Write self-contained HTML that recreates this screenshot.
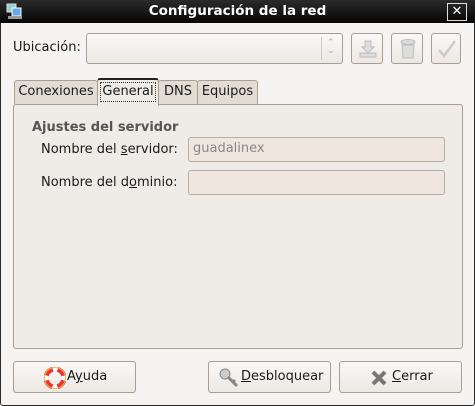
<!DOCTYPE html><html><head><style>
body{margin:0;width:475px;height:406px;overflow:hidden;font-family:"DejaVu Sans","Liberation Sans",sans-serif;font-size:13px;color:#1a1a1a}
.win{position:absolute;left:0;top:0;width:473px;height:404px;border:1px solid #2a2a2a;border-radius:3px;background:#f5f4f2}
.title{position:absolute;left:0;top:0;width:475px;height:23px;background:linear-gradient(#2b2b2b,#050505);color:#fff;font-weight:bold;font-size:13.5px;text-align:center;line-height:23px}
.ab{position:absolute}
.btn{position:absolute;border:1px solid #a89e93;border-radius:3px;background:linear-gradient(#faf9f8,#ece8e3);box-sizing:border-box}
.entry{position:absolute;border:1px solid #b8ada2;border-radius:3px;background:#efe6df;box-sizing:border-box}
.tab{position:absolute;border:1px solid #a89e93;border-bottom:none;border-radius:3px 3px 0 0;background:#e3dcd4;box-sizing:border-box;text-align:center;line-height:22px}
u{text-decoration:underline}
</style></head><body>
<div class="win"></div>
<div class="title">Configuración de la red</div>
<svg class="ab" style="left:6px;top:3px" width="18" height="17"><rect x="1" y="1" width="9" height="8" fill="#9cc" stroke="#ddd"/><rect x="6" y="5" width="9" height="8" fill="#6ae" stroke="#fff"/><rect x="2" y="13" width="14" height="3" fill="#999"/></svg>
<div class="ab" style="left:447px;top:3px;width:20px;height:18px;border:1px solid #ddd;box-sizing:border-box;color:#fff;font-weight:bold;text-align:center;line-height:16px;font-size:13px">✕</div>
<div class="ab" style="left:13px;top:40px">Ubicación:</div>
<div class="btn" style="left:86px;top:33px;width:257px;height:31px"><div class="ab" style="left:234px;top:3px;width:1px;height:23px;background:#ccc"></div><div class="ab" style="left:240px;top:5px;color:#aaa;font-size:9px;line-height:8px">⌃<br>⌄</div></div>
<div class="btn" style="left:351px;top:33px;width:32px;height:31px"><svg class="ab" style="left:6px;top:5px" width="20" height="20"><path d="M7 2h6v6h3l-6 6-6-6h3z" fill="#ddd" stroke="#bbb"/><rect x="2" y="14" width="16" height="4" fill="#ddd" stroke="#bbb"/></svg></div>
<div class="btn" style="left:391px;top:33px;width:32px;height:31px"><svg class="ab" style="left:7px;top:4px" width="18" height="22"><ellipse cx="9" cy="4" rx="7" ry="2.5" fill="#ddd" stroke="#bbb"/><path d="M3 7h12l-1 13H4z" fill="#ddd" stroke="#bbb"/></svg></div>
<div class="btn" style="left:431px;top:33px;width:30px;height:31px"><svg class="ab" style="left:5px;top:5px" width="20" height="20"><path d="M2 11l5 6L18 2" fill="none" stroke="#ccc" stroke-width="2.5"/></svg></div>
<div class="ab" style="left:13px;top:104px;width:450px;height:245px;border:1px solid #a89e93;border-radius:3px;background:#efebe7;box-sizing:border-box"></div>
<div class="tab" style="left:14px;top:80px;width:84px;height:24px">Conexiones</div>
<div class="tab" style="left:158px;top:80px;width:40px;height:24px">DNS</div>
<div class="tab" style="left:197px;top:80px;width:61px;height:24px">Equipos</div>
<div class="tab" style="left:97px;top:78px;width:62px;height:28px;background:#efebe7;border-top:2px solid #222"><span style="border:1px dotted #333;padding:0 1px;line-height:18px;display:inline-block;margin-top:2px">General</span></div>
<div class="ab" style="left:32px;top:120px;font-weight:bold;color:#555">Ajustes del servidor</div>
<div class="ab" style="left:41px;top:142px">Nombre del <u>s</u>ervidor:</div>
<div class="ab" style="left:41px;top:175px">Nombre del d<u>o</u>minio:</div>
<div class="entry" style="left:188px;top:137px;width:257px;height:25px;color:#888;padding-left:4px;line-height:22px">guadalinex</div>
<div class="entry" style="left:188px;top:170px;width:257px;height:25px"></div>
<div class="btn" style="left:13px;top:361px;width:123px;height:32px"><svg class="ab" style="left:30px;top:5px" width="22" height="22"><circle cx="11" cy="11" r="9" fill="none" stroke="#e33" stroke-width="5"/><circle cx="11" cy="11" r="9" fill="none" stroke="#fff" stroke-width="5" stroke-dasharray="5 9.1" stroke-dashoffset="2.5"/><circle cx="11" cy="11" r="10.5" fill="none" stroke="#e8b84a"/></svg><span class="ab" style="left:53px;top:7px">A<u>y</u>uda</span></div>
<div class="btn" style="left:208px;top:361px;width:123px;height:32px"><svg class="ab" style="left:9px;top:5px" width="24" height="22"><circle cx="7" cy="7" r="5" fill="#ccc" stroke="#888"/><path d="M10 10l9 9M15 15l2-2" stroke="#888" stroke-width="3"/></svg><span class="ab" style="left:32px;top:7px"><u>D</u>esbloquear</span></div>
<div class="btn" style="left:339px;top:361px;width:123px;height:32px"><svg class="ab" style="left:30px;top:7px" width="18" height="18"><path d="M3 3l12 12M15 3L3 15" stroke="#777" stroke-width="4"/></svg><span class="ab" style="left:52px;top:7px"><u>C</u>errar</span></div>
</body></html>
